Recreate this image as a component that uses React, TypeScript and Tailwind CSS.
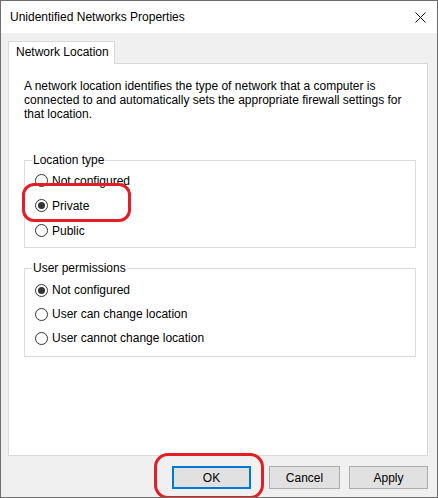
import React from "react";

function Radio({ checked, label }: { checked?: boolean; label: string }) {
  return (
    <div className="flex items-center h-[25px] pl-[10px]">
      <span className="w-[13px] h-[13px] rounded-full border border-[#333333] bg-white flex items-center justify-center shrink-0">
        {checked && <span className="w-[7px] h-[7px] rounded-full bg-[#333333]" />}
      </span>
      <span className="ml-[4px] text-[12px] leading-[14px] text-black">{label}</span>
    </div>
  );
}

function Radio2({ checked, label }: { checked?: boolean; label: string }) {
  return (
    <div className="flex items-center h-[24px] pl-[10px]">
      <span className="w-[13px] h-[13px] rounded-full border border-[#333333] bg-white flex items-center justify-center shrink-0">
        {checked && <span className="w-[7px] h-[7px] rounded-full bg-[#333333]" />}
      </span>
      <span className="ml-[4px] text-[12px] leading-[14px] text-black">{label}</span>
    </div>
  );
}

export default function App() {
  return (
    <div className="relative w-[438px] h-[498px] bg-[#f0f0f0] border border-[#6e6e6e] flex flex-col font-['Liberation_Sans',Arial,sans-serif] text-[12px] text-black overflow-hidden">
      {/* Title bar */}
      <div className="h-[32px] bg-white flex items-center justify-between pl-[9px] pr-[11px] shrink-0">
        <span className="text-[12px] leading-[14px] text-black">Unidentified Networks Properties</span>
        <svg width="11" height="11" viewBox="0 0 11 11" className="mr-[0px]">
          <line x1="0.5" y1="0.5" x2="10.5" y2="10.5" stroke="#111" strokeWidth="1" />
          <line x1="10.5" y1="0.5" x2="0.5" y2="10.5" stroke="#111" strokeWidth="1" />
        </svg>
      </div>

      {/* Body */}
      <div className="flex flex-col pl-[7px] pr-[8px]">
        {/* Tabs */}
        <div className="flex mt-[8px] h-[22px]">
          <div className="relative z-10 w-[107px] h-[23px] bg-white border-l border-t border-r border-[#d9d9d9] pl-[7px] pt-[3px] leading-[14px]">
            Network Location
          </div>
        </div>

        {/* Panel */}
        <div className="w-[420px] h-[393px] bg-white border border-[#d9d9d9] pl-[15px] pt-[15px]">
          <p className="leading-[14px] whitespace-nowrap">
            A network location identifies the type of network that a computer is
            <br />
            connected to and automatically sets the appropriate firewall settings for
            <br />
            that location.
          </p>

          <fieldset className="mt-[32px] w-[392px] border border-[#dcdcdc] pt-[1px] pb-[4px]">
            <legend className="ml-[7px] px-[1px] leading-[14px]">Location type</legend>
            <Radio label="Not configured" />
            <Radio checked label="Private" />
            <Radio label="Public" />
          </fieldset>

          <fieldset className="mt-[13px] w-[392px] border border-[#dcdcdc] pt-[3px] pb-[6px]">
            <legend className="ml-[7px] px-[1px] leading-[14px]">User permissions</legend>
            <Radio2 checked label="Not configured" />
            <Radio2 label="User can change location" />
            <Radio2 label="User cannot change location" />
          </fieldset>
        </div>

        {/* Buttons */}
        <div className="flex mt-[10px] pl-[164px]">
          <button className="w-[79px] h-[23px] bg-[#e1e1e1] border-2 border-[#0078d7] flex items-center justify-center leading-[14px]">
            OK
          </button>
          <button className="ml-[18px] w-[71px] h-[23px] bg-[#e1e1e1] border border-[#adadad] flex items-center justify-center leading-[14px]">
            Cancel
          </button>
          <button className="ml-[9px] w-[79px] h-[23px] bg-[#e1e1e1] border border-[#adadad] flex items-center justify-center leading-[14px]">
            Apply
          </button>
        </div>
      </div>

      {/* Red annotations */}
      <div className="absolute left-[21px] top-[182px] w-[109px] h-[39px] border-[3px] border-[#e31e26] rounded-[12px] pointer-events-none" />
      <div className="absolute left-[153px] top-[452px] w-[110px] h-[46px] border-[3px] border-[#e31e26] rounded-[14px] pointer-events-none" />
    </div>
  );
}
